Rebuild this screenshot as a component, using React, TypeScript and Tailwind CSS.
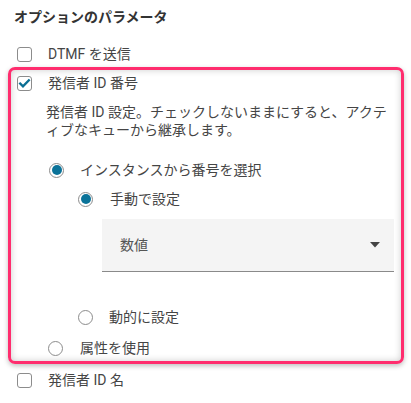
import React from "react";

function Checkbox({ checked }: { checked?: boolean }) {
  return (
    <span className="flex h-[15px] w-[15px] shrink-0 items-center justify-center rounded-[3px] border border-[#8c8c8c] bg-white">
      {checked && (
        <svg width="13" height="13" viewBox="0 0 13 13">
          <path d="M2.2 6.6 L5 9.4 L10.8 3.4" fill="none" stroke="#0b6f94" strokeWidth="2.4" strokeLinecap="square" />
        </svg>
      )}
    </span>
  );
}

function Radio({ checked }: { checked?: boolean }) {
  return (
    <span className="flex h-[15px] w-[15px] shrink-0 items-center justify-center rounded-full border border-[#8c8c8c] bg-white">
      {checked && <span className="h-[10px] w-[10px] rounded-full bg-[#0b7399]" />}
    </span>
  );
}

export default function App() {
  return (
    <div
      className="h-[403px] w-[411px] overflow-hidden bg-white text-[14px] text-[#454545]"
      style={{ fontFamily: 'Roboto, "Noto Sans CJK JP", sans-serif' }}
    >
      <div className="mt-[7px] flex h-[20px] items-center pl-[14px] font-bold text-[#333]">
        オプションのパラメータ
      </div>
      <div className="mt-[15px] flex h-[24px] items-center pl-[17px]">
        <Checkbox />
        <span className="ml-[16px]">DTMF を送信</span>
      </div>
      <div className="ml-[8px] mt-[1px] w-[396px] rounded-[7px] border-[3px] border-[#ff2d6e] pb-[1px] shadow-[0_2px_5px_rgba(0,0,0,0.25),inset_0_0_7px_rgba(0,0,0,0.2)]">
        <div className="flex h-[26px] items-center pl-[6px]">
          <Checkbox checked />
          <span className="ml-[16px]">発信者 ID 番号</span>
        </div>
        <div className="mt-[7px] pl-[35px] leading-[18px]">
          <div className="whitespace-nowrap">発信者 ID 設定。チェックしないままにすると、アクテ</div>
          <div className="whitespace-nowrap">ィブなキューから継承します。</div>
        </div>
        <div className="mt-[19px] flex h-[24px] items-center pl-[38px]">
          <Radio checked />
          <span className="ml-[16px]">インスタンスから番号を選択</span>
        </div>
        <div className="mt-[5px] flex h-[24px] items-center pl-[67px]">
          <Radio checked />
          <span className="ml-[17px]">手動で設定</span>
        </div>
        <div className="ml-[91px] mr-[7px] mt-[8px] flex h-[53px] items-center justify-between border-b border-[#8a8a8a] bg-[#f4f4f4] pl-[18px] pr-[14px]">
          <span className="text-[#555]">数値</span>
          <svg width="10" height="6" viewBox="0 0 10 6">
            <path d="M0 0 H10 L5 5.5 Z" fill="#444" />
          </svg>
        </div>
        <div className="mt-[33px] flex h-[24px] items-center pl-[67px]">
          <Radio />
          <span className="ml-[16px]">動的に設定</span>
        </div>
        <div className="mt-[7px] flex h-[24px] items-center pl-[37px]">
          <Radio />
          <span className="ml-[17px]">属性を使用</span>
        </div>
      </div>
      <div className="mt-[4px] flex h-[24px] items-center pl-[17px]">
        <Checkbox />
        <span className="ml-[16px]">発信者 ID 名</span>
      </div>
    </div>
  );
}
